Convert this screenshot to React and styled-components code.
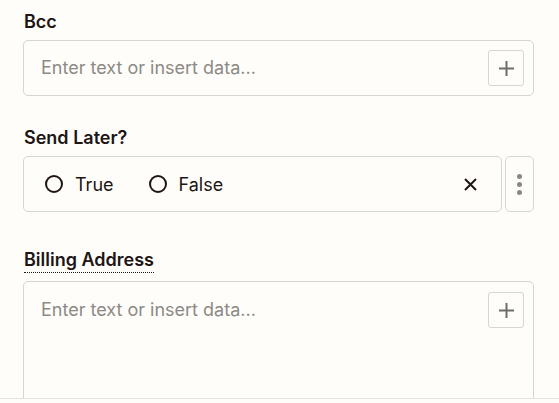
import React from "react";
import styled, { createGlobalStyle } from "styled-components";

const GlobalStyle = createGlobalStyle`
  html, body { margin: 0; padding: 0; background: #fffdf9; }
  body { font-family: Inter, "Noto Sans", sans-serif; color: #201515; }
  * { box-sizing: border-box; }
`;

const Page = styled.div`
  width: 559px;
  height: 403px;
  display: flex;
  flex-direction: column;
  background: #fffdf9;
`;

const Scroll = styled.div`
  flex: 1;
  overflow: hidden;
  padding: 10px 25px 0 23px;
  display: flex;
  flex-direction: column;
`;

const Footer = styled.div`
  height: 5px;
  border-top: 1px solid #e3e1dc;
`;

const Field = styled.div`
  display: flex;
  flex-direction: column;
  flex-shrink: 0;
  margin-top: ${(p) => p.$gap || 0}px;
`;

const Label = styled.div`
  font-size: 18px;
  font-weight: 600;
  line-height: 24px;
  color: #201515;
  padding-left: 1px;
  margin-bottom: ${(p) => (p.$dotted ? 9 : 6)}px;
  span {
    ${(p) => p.$dotted && "border-bottom: 1px dotted #201515; padding-bottom: 2px;"}
  }
`;

const Box = styled.div`
  flex-shrink: 0;
  height: ${(p) => (p.$tall ? "170px" : "56px")};
  border: 1px solid #d7d5d0;
  border-radius: 5px;
  background: #fffdf9;
  display: flex;
  align-items: ${(p) => (p.$tall ? "flex-start" : "center")};
  padding: ${(p) => (p.$tall ? "10px 9px 0 17px" : "0 9px 0 17px")};
`;

const Placeholder = styled.div`
  flex: 1;
  font-size: 18px;
  line-height: 36px;
  color: #8c8a86;
`;

const IconButton = styled.div`
  width: 36px;
  height: 36px;
  border: 1px solid #d7d5d0;
  border-radius: 3px;
  display: flex;
  align-items: center;
  justify-content: center;
  color: #6f6d69;
`;

const Row = styled.div`
  display: flex;
  gap: 3px;
`;

const RadioBox = styled(Box)`
  flex: 1;
  padding: 0 24px 0 21px;
`;

const Option = styled.label`
  display: flex;
  align-items: center;
  gap: 12px;
  font-size: 18px;
  color: #201515;
  margin-right: 35px;
`;

const Circle = styled.span`
  width: 18px;
  height: 18px;
  border: 2px solid #201515;
  border-radius: 50%;
`;

const Spacer = styled.div`
  flex: 1;
`;

const MenuButton = styled.div`
  width: 29px;
  height: 56px;
  border: 1px solid #d7d5d0;
  border-radius: 5px;
  display: flex;
  flex-direction: column;
  align-items: center;
  justify-content: center;
  gap: 3px;
  i {
    width: 5px;
    height: 5px;
    border-radius: 50%;
    background: #8a8884;
  }
`;

const Plus = () => (
  <svg width="17" height="17" viewBox="0 0 17 17">
    <path d="M8.5 1v15M1 8.5h15" stroke="currentColor" strokeWidth="2" />
  </svg>
);

const Cross = () => (
  <svg width="13" height="13" viewBox="0 0 13 13">
    <path d="M1 1l11 11M12 1L1 12" stroke="#201515" strokeWidth="2" />
  </svg>
);

export default function App() {
  return (
    <Page>
      <GlobalStyle />
      <Scroll>
        <Field>
          <Label>Bcc</Label>
          <Box>
            <Placeholder>Enter text or insert data...</Placeholder>
            <IconButton><Plus /></IconButton>
          </Box>
        </Field>

        <Field $gap={30}>
          <Label>Send Later?</Label>
          <Row>
            <RadioBox>
              <Option><Circle />True</Option>
              <Option><Circle />False</Option>
              <Spacer />
              <Cross />
            </RadioBox>
            <MenuButton><i /><i /><i /></MenuButton>
          </Row>
        </Field>

        <Field $gap={36}>
          <Label $dotted><span>Billing Address</span></Label>
          <Box $tall>
            <Placeholder>Enter text or insert data...</Placeholder>
            <IconButton><Plus /></IconButton>
          </Box>
        </Field>
      </Scroll>
      <Footer />
    </Page>
  );
}
